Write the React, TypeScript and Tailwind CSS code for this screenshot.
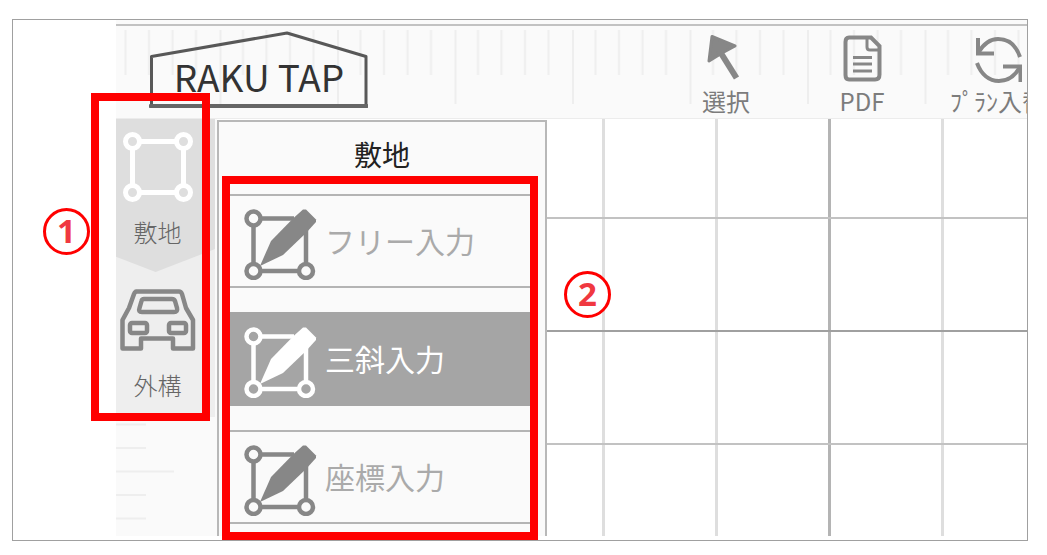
import type { ReactNode } from "react";

const ICON_GRAY = "#878787";

const tools = [
  { label: "選択", icon: <CursorIcon /> },
  { label: "PDF", icon: <PdfIcon /> },
  { label: "ﾌﾟﾗﾝ入替", icon: <SwapIcon /> },
];

const siteMenu = [
  { label: "フリー入力", active: false },
  { label: "三斜入力", active: true },
  { label: "座標入力", active: false },
];

function Logo() {
  return (
    <svg className="block h-[78px] w-[219px] shrink-0" viewBox="0 0 219 78" role="img" aria-label="RAKU TAP">
      <path d="M2.5 75V25.5L138 2L217 25.5V75" fill="none" stroke="#585858" strokeWidth="3" strokeLinejoin="round" />
      <path d="M1.5 75H218" stroke="#666" strokeWidth="4" strokeLinecap="round" />
      <text
        x="110"
        y="61"
        textAnchor="middle"
        className="fill-[#333] font-['Noto_Sans_CJK_JP',sans-serif] text-[37px]"
      >
        RAKU TAP
      </text>
    </svg>
  );
}

function CursorIcon() {
  return (
    <svg className="size-12" viewBox="0 0 48 48" fill={ICON_GRAY} stroke={ICON_GRAY} strokeLinejoin="round">
      <path d="M10 1.5L33 11L20 18L7 26Z" strokeWidth="3" />
      <path d="M17 15L34.5 43" strokeWidth="6" />
    </svg>
  );
}

function PdfIcon() {
  return (
    <svg className="size-12" viewBox="0 0 48 48" fill="none" stroke={ICON_GRAY} strokeWidth="4">
      <path d="M11 2.5H33L41.5 11V39.5Q41.5 44.5 37 44.5H11Q7.5 44.5 7.5 40V7Q7.5 2.5 11 2.5Z" />
      <path d="M29 2V12Q29 15 32 15H42" strokeWidth="3" />
      <path d="M15 22.5H34M15 29H34M15 36H34" strokeWidth="3" />
    </svg>
  );
}

function SwapIcon() {
  return (
    <svg className="size-12" viewBox="0 0 48 48" fill="none" stroke={ICON_GRAY} strokeWidth="4">
      <path d="M4 3V18.5H20" />
      <path d="M4 18C10 8 16 4 24 4C34 4 42 10 46 22" />
      <path d="M3 28C7 39 15 46 25 46C34 46 41 41 46 32" />
      <path d="M29 31.5H46.5V47" />
    </svg>
  );
}

function SiteIcon() {
  return (
    <svg className="h-[70px] w-[72px]" viewBox="0 0 72 70" fill="none" stroke="#fff" strokeWidth="5">
      <path d="M17 9.5H54M17 60.5H54M10.5 16V54M61.5 16V54" />
      <circle cx="10.5" cy="9.5" r="7" />
      <circle cx="61.5" cy="9.5" r="7" />
      <circle cx="10.5" cy="60.5" r="7" />
      <circle cx="61.5" cy="60.5" r="7" />
    </svg>
  );
}

function CarIcon() {
  return (
    <svg
      className="h-[62px] w-[76px]"
      viewBox="0 0 76 62"
      fill="none"
      stroke={ICON_GRAY}
      strokeWidth="4.5"
      strokeLinejoin="round"
    >
      <path d="M16 2.5H59Q61 2.5 62 5L66 19L73 31V59.5H53V49.5H21V59.5H2.5V31L9 19L14 5Q15 2.5 17 2.5Z" />
      <path d="M24 10H52Q54 10 55 12L57 19Q58 23 54 23H22Q18 23 19.5 19L21.5 12Q22 10 24 10Z" />
      <rect x="10" y="34" width="17" height="10" rx="2" />
      <rect x="49" y="34" width="17" height="10" rx="2" />
    </svg>
  );
}

function DrawIcon() {
  return (
    <svg className="h-[78px] w-[73px] shrink-0" viewBox="0 0 73 78" fill="none" stroke="currentColor" strokeWidth="4.5">
      <path d="M16 16.5H50M9.5 23V62M16 69H55M62 62V28" />
      <circle cx="9.5" cy="16.5" r="7" />
      <circle cx="9.5" cy="69" r="7" />
      <circle cx="62" cy="69" r="7" />
      <path d="M59 7.500H62L72 17.500V20L62 31L39 53L16 64L27 39L49 16.500Z" fill="currentColor" stroke="none" />
    </svg>
  );
}

function TopRuler() {
  return (
    <svg className="absolute inset-x-0 top-[10px] h-[74px] w-full" aria-hidden="true">
      <defs>
        <pattern id="ruler-x" x="-14" width="117.5" height="74" patternUnits="userSpaceOnUse">
          <path d="M23.5 0V45M47 0V45M70.5 0V45M94 0V45M1 0V74" stroke="#eee" strokeWidth="2" />
        </pattern>
      </defs>
      <rect width="100%" height="74" fill="url(#ruler-x)" />
    </svg>
  );
}

function SideRuler() {
  return (
    <svg className="h-[119px] w-full" aria-hidden="true">
      <path d="M0 7.5H30M0 31H30M0 54.5H58M0 78H30M0 101.5H30" stroke="#eee" strokeWidth="2" />
    </svg>
  );
}

function DrawingGrid() {
  return (
    <svg className="absolute inset-0 size-full" aria-hidden="true">
      <defs>
        <pattern id="grid-x" x="-157" width="339" height="417" patternUnits="userSpaceOnUse">
          <path d="M213.5 0V417M326.5 0V417" stroke="#dedede" strokeWidth="3" />
          <path d="M100.5 0V417" stroke="#b4b4b4" strokeWidth="3" />
        </pattern>
      </defs>
      <rect width="100%" height="100%" fill="url(#grid-x)" />
      <rect y="98" width="100%" height="2" fill="#c2c2c2" />
      <rect y="211" width="100%" height="2" fill="#a0a0a0" />
      <rect y="324" width="100%" height="2" fill="#c2c2c2" />
    </svg>
  );
}

function Callout({ className, children }: { className: string; children: ReactNode }) {
  return (
    <span
      className={`absolute flex size-[47px] items-center justify-center rounded-full border-3 border-[#ff0000] bg-white pb-[2px] font-['Noto_Sans',sans-serif] text-[33px] leading-none font-bold text-[#f03840] ${className}`}
    >
      {children}
    </span>
  );
}

export default function App() {
  return (
    <div className="bg-white pt-[19px] pr-[19px] pb-[14px] pl-3 font-['Noto_Sans_CJK_JP',sans-serif]">
      <div className="relative overflow-hidden border border-[#a0a0a0] pb-1 pl-[103px]">
        <header className="relative h-[99px] border-b border-[#ececec] bg-[#fafafa] pt-1">
          <div className="h-[2px] bg-[#c2c2c2]" />
          <TopRuler />
          <div className="relative flex items-start pt-[5px] pl-[33px]">
            <Logo />
            <nav className="ml-[310px] flex gap-10 pt-1">
              {tools.map((tool) => (
                <button
                  key={tool.label}
                  type="button"
                  className="flex w-24 shrink-0 flex-col items-center gap-1 text-2xl leading-7 whitespace-nowrap text-[#7c7c7c]"
                >
                  {tool.icon}
                  {tool.label}
                </button>
              ))}
            </nav>
          </div>
        </header>

        <div className="flex">
          <aside className="w-[101px] shrink-0 bg-[#fafafa]">
            <div className="w-[99px] bg-[#eee] text-2xl leading-9 font-light text-[#666]">
              <button
                type="button"
                className="flex h-[153px] w-full flex-col items-center gap-3 bg-[#dedede] pt-[13px] pr-4 [clip-path:polygon(0_0,100%_0,100%_85%,40%_100%,0_90%)]"
              >
                <SiteIcon />
                敷地
              </button>
              <button type="button" className="flex h-[145px] w-full flex-col items-center gap-4 pt-[17px] pr-4">
                <CarIcon />
                外構
              </button>
            </div>
            <SideRuler />
          </aside>

          <section className="mt-px w-[330px] shrink-0 border-2 border-b-0 border-[#b8b8b8] bg-[#fafafa]">
            <h2 className="text-center text-[28px] leading-[64px] text-[#222]">敷地</h2>
            <ul className="mx-2 mt-2 flex flex-col gap-6">
              {siteMenu.map((item) => (
                <li key={item.label}>
                  <button
                    type="button"
                    className={
                      item.active
                        ? "flex h-[94px] w-full items-center gap-2 border-y-2 border-[#a5a5a5] bg-[#a5a5a5] pl-[17px] text-white"
                        : "flex h-[94px] w-full items-center gap-2 border-y-2 border-[#b4b4b4] pl-[17px] text-[#878787]"
                    }
                  >
                    <DrawIcon />
                    <span className={item.active ? "pb-[2px] text-[30px]" : "pb-[2px] text-[30px] text-[#aaa]"}>
                      {item.label}
                    </span>
                  </button>
                </li>
              ))}
            </ul>
          </section>

          <main className="relative min-w-0 flex-1">
            <DrawingGrid />
          </main>
        </div>

        {/* Annotations */}
        <div className="pointer-events-none absolute top-[73px] left-[78px] h-[328px] w-[119px] border-8 border-[#ff0000]" />
        <div className="pointer-events-none absolute top-[156px] left-[209px] h-[364px] w-[316px] border-8 border-[#ff0000]" />
        <Callout className="top-[188px] left-[30px]">1</Callout>
        <Callout className="top-[251px] left-[551px]">2</Callout>
      </div>
    </div>
  );
}
